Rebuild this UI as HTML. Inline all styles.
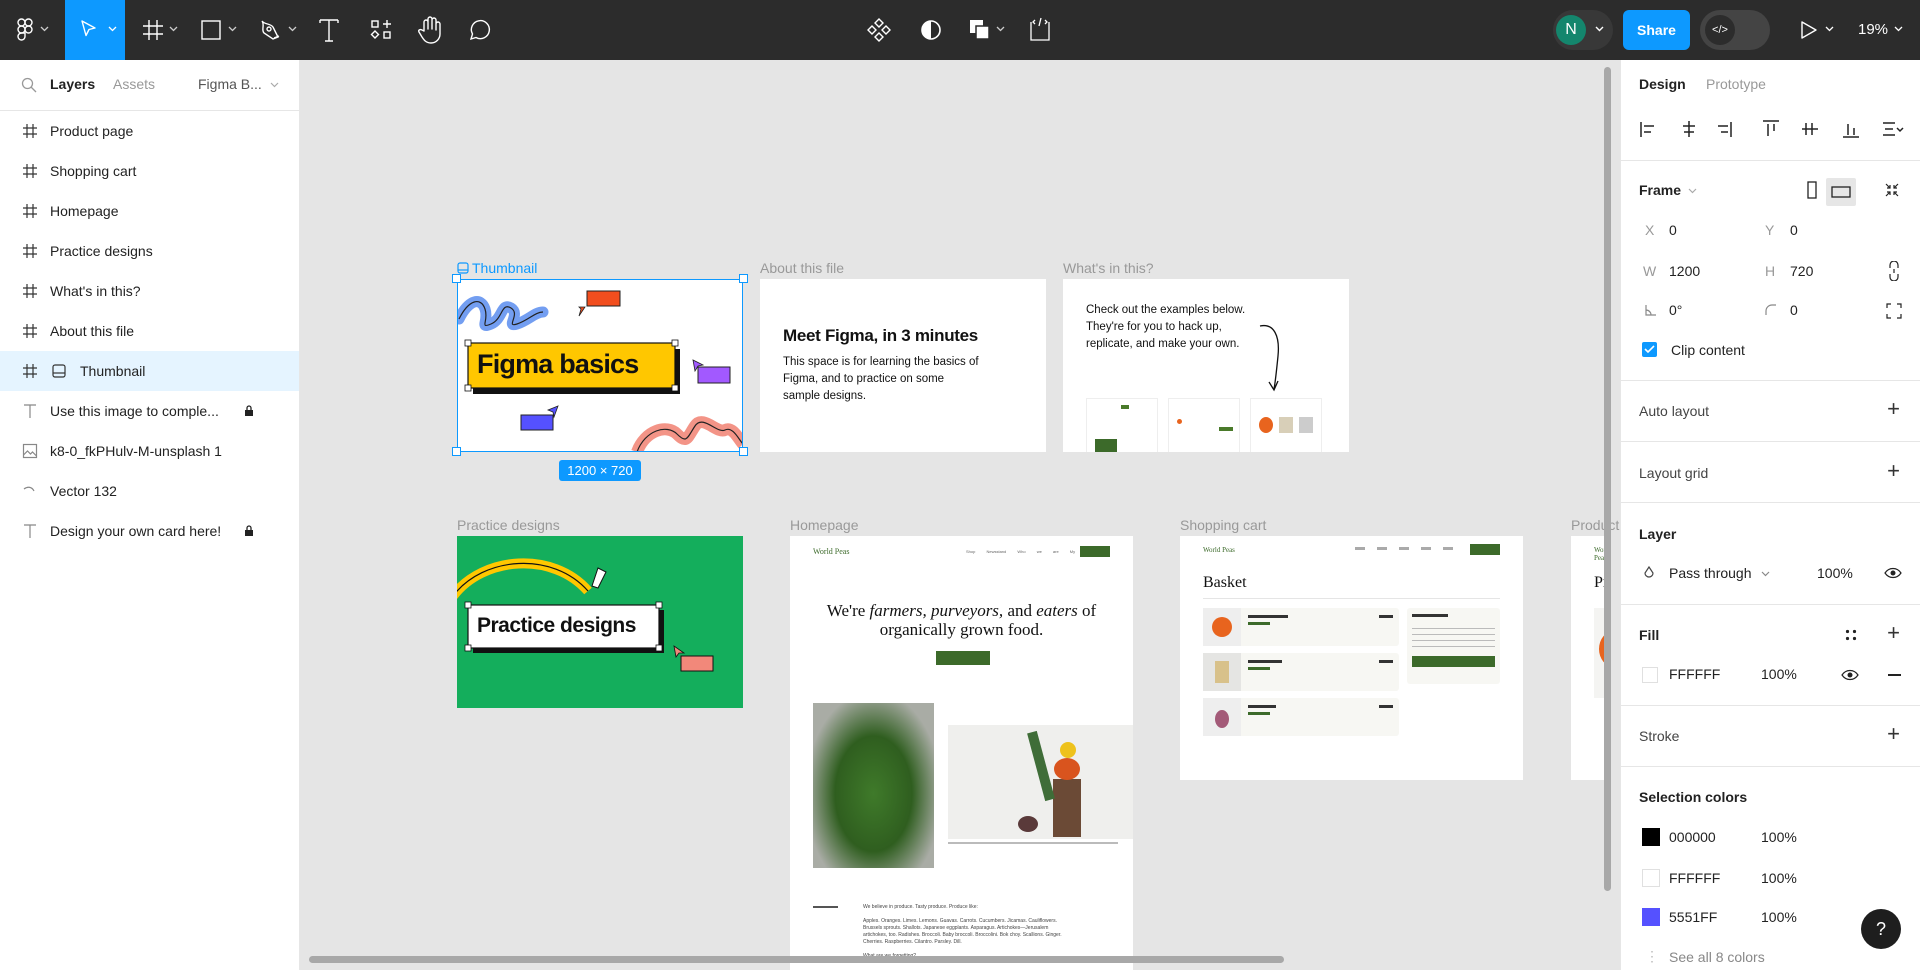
<!DOCTYPE html>
<html><head><meta charset="utf-8">
<style>
*{box-sizing:border-box;margin:0;padding:0}
body{width:1920px;height:970px;overflow:hidden;font-family:"Liberation Sans",sans-serif;background:#e5e5e5;position:relative;color:#222}
.a{position:absolute}
#top{left:0;top:0;width:1920px;height:60px;background:#2c2c2c}
#left{left:0;top:60px;width:300px;height:910px;background:#fff;border-right:1px solid #e6e6e6}
#right{left:1620px;top:60px;width:300px;height:910px;background:#fff;border-left:1px solid #e6e6e6}
.row{position:absolute;left:0;width:299px;height:40px;font-size:14px;display:flex;align-items:center}
.row .ic{position:absolute;left:22px;top:12px}
.row span{position:absolute;left:50px}
.lbl{position:absolute;font-size:14px;color:#999}
.fr{position:absolute;background:#fff;overflow:hidden}
.sec{position:absolute;left:18px;font-size:14px;color:#222}
.div{position:absolute;left:0;width:300px;height:1px;background:#e6e6e6}
.gray{color:#999}
.plus{position:absolute;right:20px;font-size:22px;font-weight:300;color:#333}
svg{display:block}
</style></head><body>

<div id="top" class="a">
  <svg class="a" style="left:16px;top:18px" width="18" height="24" viewBox="0 0 18 24" fill="none" stroke="#fff" stroke-width="1.4"><rect x="2" y="1" width="7" height="7" rx="3.5"/><rect x="9" y="1" width="7" height="7" rx="3.5"/><rect x="2" y="8" width="7" height="7" rx="3.5"/><circle cx="12.5" cy="11.5" r="3.5"/><path d="M2 18.5a3.5 3.5 0 0 0 7 0v-3.5H5.5A3.5 3.5 0 0 0 2 18.5z"/></svg>
  <svg class="a" style="left:40px;top:26px" width="9" height="6"><path d="M1 1l3.5 3.5L8 1" stroke="#ccc" fill="none" stroke-width="1.3"/></svg>
  <div class="a" style="left:65px;top:0;width:60px;height:60px;background:#0d99ff"></div>
  <svg class="a" style="left:80px;top:19px" width="18" height="22"><path d="M2 2l13 7-6 1.5-3 6z" stroke="#fff" fill="none" stroke-width="1.4" stroke-linejoin="round"/></svg>
  <svg class="a" style="left:108px;top:26px" width="9" height="6"><path d="M1 1l3.5 3.5L8 1" stroke="#fff" fill="none" stroke-width="1.3"/></svg>
  <svg class="a" style="left:142px;top:19px" width="22" height="22" stroke="#fff" stroke-width="1.4"><path d="M7 1v20M15 1v20M1 7h20M1 15h20"/></svg>
  <svg class="a" style="left:169px;top:26px" width="9" height="6"><path d="M1 1l3.5 3.5L8 1" stroke="#ccc" fill="none" stroke-width="1.3"/></svg>
  <svg class="a" style="left:200px;top:19px" width="22" height="22"><rect x="2" y="2" width="18" height="18" stroke="#fff" fill="none" stroke-width="1.4"/></svg>
  <svg class="a" style="left:228px;top:26px" width="9" height="6"><path d="M1 1l3.5 3.5L8 1" stroke="#ccc" fill="none" stroke-width="1.3"/></svg>
  <svg class="a" style="left:259px;top:18px" width="24" height="24" stroke="#fff" fill="none" stroke-width="1.4"><path d="M3 3c3 4 8 2 11 6l5 10-5 2-9-6C2 12 6 7 3 3z"/><circle cx="10" cy="11" r="2"/><path d="M15 20l5-2"/></svg>
  <svg class="a" style="left:288px;top:26px" width="9" height="6"><path d="M1 1l3.5 3.5L8 1" stroke="#ccc" fill="none" stroke-width="1.3"/></svg>
  <svg class="a" style="left:319px;top:18px" width="20" height="24" stroke="#fff" fill="none" stroke-width="1.4"><path d="M1 2h18M10 2v21M6 23h8M1 2v3M19 2v3"/></svg>
  <svg class="a" style="left:370px;top:19px" width="22" height="22" stroke="#fff" fill="none" stroke-width="1.4"><rect x="2" y="2" width="6" height="6"/><path d="M17 1v8M13 5h8"/><path d="M5 12l3.5 3.5L5 19l-3.5-3.5z"/><rect x="14" y="13" width="6" height="6"/></svg>
  <svg class="a" style="left:418px;top:15px" width="24" height="30" stroke="#fff" fill="none" stroke-width="1.4" stroke-linejoin="round"><path d="M6 16V7a2 2 0 0 1 4 0v7V4a2 2 0 0 1 4 0v10V5a2 2 0 0 1 4 0v10V9a2 2 0 0 1 4 0v10c0 5-4 9-9 9s-7-3-9-6l-3-5c-1-2 1-3 3-2z"/></svg>
  <svg class="a" style="left:467px;top:17px" width="26" height="26" stroke="#fff" fill="none" stroke-width="1.4"><path d="M4 22l1.5-5A9 9 0 1 1 9 20.5z"/></svg>
  <svg class="a" style="left:867px;top:18px" width="24" height="24" stroke="#fff" fill="none" stroke-width="1.4"><path d="M12 1l4 4-4 4-4-4zM12 15l4 4-4 4-4-4zM5 8l4 4-4 4-4-4zM19 8l4 4-4 4-4-4z"/></svg>
  <svg class="a" style="left:920px;top:19px" width="22" height="22"><circle cx="11" cy="11" r="9" stroke="#fff" fill="none" stroke-width="1.6"/><path d="M11 2a9 9 0 0 0 0 18z" fill="#fff"/></svg>
  <svg class="a" style="left:968px;top:18px" width="24" height="24"><rect x="2" y="2" width="13" height="13" fill="#fff"/><rect x="8" y="8" width="13" height="13" fill="#fff" stroke="#2c2c2c" stroke-width="1.5"/></svg>
  <svg class="a" style="left:996px;top:26px" width="9" height="6"><path d="M1 1l3.5 3.5L8 1" stroke="#ccc" fill="none" stroke-width="1.3"/></svg>
  <svg class="a" style="left:1028px;top:16px" width="24" height="26" stroke="#fff" fill="none" stroke-width="1.3"><path d="M3 6v18h18V6M7 4L5 6l2 2M17 4l2 2-2 2M13 2l-2 8"/></svg>
  <div class="a" style="left:1553px;top:10px;width:60px;height:40px;border-radius:20px;background:#383838"></div>
  <div class="a" style="left:1556px;top:15px;width:30px;height:30px;border-radius:50%;background:#14866d;color:#fff;font-size:16px;text-align:center;line-height:30px">N</div>
  <svg class="a" style="left:1595px;top:26px" width="9" height="6"><path d="M1 1l3.5 3.5L8 1" stroke="#fff" fill="none" stroke-width="1.4"/></svg>
  <div class="a" style="left:1623px;top:10px;width:67px;height:40px;border-radius:6px;background:#0d99ff;color:#fff;font-size:14px;font-weight:bold;text-align:center;line-height:40px">Share</div>
  <div class="a" style="left:1700px;top:10px;width:70px;height:40px;border-radius:20px;background:#444"></div>
  <div class="a" style="left:1705px;top:15px;width:30px;height:30px;border-radius:50%;background:#2c2c2c;color:#fff;font-size:11px;text-align:center;line-height:30px">&lt;/&gt;</div>
  <svg class="a" style="left:1800px;top:20px" width="18" height="20"><path d="M2 2l14 8-14 8z" stroke="#fff" fill="none" stroke-width="1.4" stroke-linejoin="round"/></svg>
  <svg class="a" style="left:1825px;top:26px" width="9" height="6"><path d="M1 1l3.5 3.5L8 1" stroke="#fff" fill="none" stroke-width="1.3"/></svg>
  <div class="a" style="left:1858px;top:21px;color:#fff;font-size:15px">19%</div>
  <svg class="a" style="left:1894px;top:26px" width="9" height="6"><path d="M1 1l3.5 3.5L8 1" stroke="#fff" fill="none" stroke-width="1.3"/></svg>
</div>

<div id="left" class="a">
  <svg class="a" style="left:21px;top:17px" width="16" height="16" stroke="#999" fill="none" stroke-width="1.3"><circle cx="6.5" cy="6.5" r="5"/><path d="M10 10l5 5"/></svg>
  <div class="a" style="left:50px;top:16px;font-size:14px;font-weight:bold">Layers</div>
  <div class="a" style="left:113px;top:16px;font-size:14px;color:#999">Assets</div>
  <div class="a" style="left:198px;top:16px;font-size:14px;color:#555">Figma B...</div>
  <svg class="a" style="left:270px;top:22px" width="9" height="6"><path d="M1 1l3.5 3.5L8 1" stroke="#aaa" fill="none" stroke-width="1.2"/></svg>
  <div class="a" style="left:0;top:50px;width:299px;height:1px;background:#e6e6e6"></div>

  <div class="row" style="top:51px"><svg class="ic" width="16" height="16" stroke="#333" stroke-width="1.2"><path d="M5 1v14M11 1v14M1 5h14M1 11h14"/></svg><span>Product page</span></div>
  <div class="row" style="top:91px"><svg class="ic" width="16" height="16" stroke="#333" stroke-width="1.2"><path d="M5 1v14M11 1v14M1 5h14M1 11h14"/></svg><span>Shopping cart</span></div>
  <div class="row" style="top:131px"><svg class="ic" width="16" height="16" stroke="#333" stroke-width="1.2"><path d="M5 1v14M11 1v14M1 5h14M1 11h14"/></svg><span>Homepage</span></div>
  <div class="row" style="top:171px"><svg class="ic" width="16" height="16" stroke="#333" stroke-width="1.2"><path d="M5 1v14M11 1v14M1 5h14M1 11h14"/></svg><span>Practice designs</span></div>
  <div class="row" style="top:211px"><svg class="ic" width="16" height="16" stroke="#333" stroke-width="1.2"><path d="M5 1v14M11 1v14M1 5h14M1 11h14"/></svg><span>What's in this?</span></div>
  <div class="row" style="top:251px"><svg class="ic" width="16" height="16" stroke="#333" stroke-width="1.2"><path d="M5 1v14M11 1v14M1 5h14M1 11h14"/></svg><span>About this file</span></div>
  <div class="row" style="top:291px;background:#e5f4ff"><svg class="ic" width="16" height="16" stroke="#333" stroke-width="1.2"><path d="M5 1v14M11 1v14M1 5h14M1 11h14"/></svg><svg class="a" style="left:51px;top:12px" width="16" height="16" stroke="#333" fill="none" stroke-width="1.2"><rect x="2" y="2" width="12" height="12" rx="2"/><path d="M2 10h12"/></svg><span style="left:80px">Thumbnail</span></div>
  <div class="row" style="top:331px"><svg class="ic" width="16" height="16" stroke="#888" stroke-width="1.2"><path d="M2 2h12M8 2v13"/></svg><span>Use this image to comple...</span><svg class="a" style="left:244px;top:14px" width="10" height="12"><rect x="1" y="5" width="8" height="6" fill="#222"/><path d="M3 5V3a2 2 0 0 1 4 0v2" stroke="#222" fill="none" stroke-width="1.3"/></svg></div>
  <div class="row" style="top:371px"><svg class="ic" width="16" height="16" stroke="#888" fill="none" stroke-width="1.2"><rect x="1.5" y="1.5" width="13" height="13"/><path d="M1.5 12l4-4 3 3 2-2 4 4"/></svg><span>k8-0_fkPHulv-M-unsplash 1</span></div>
  <div class="row" style="top:411px"><svg class="ic" width="16" height="16" stroke="#888" fill="none" stroke-width="1.2"><path d="M2 6c4-3 8-2 10 2"/></svg><span>Vector 132</span></div>
  <div class="row" style="top:451px"><svg class="ic" width="16" height="16" stroke="#888" stroke-width="1.2"><path d="M2 2h12M8 2v13"/></svg><span>Design your own card here!</span><svg class="a" style="left:244px;top:14px" width="10" height="12"><rect x="1" y="5" width="8" height="6" fill="#222"/><path d="M3 5V3a2 2 0 0 1 4 0v2" stroke="#222" fill="none" stroke-width="1.3"/></svg></div>
</div>

<div class="lbl" style="left:472px;top:260px;color:#0d99ff">Thumbnail</div>
<svg class="a" style="left:457px;top:262px" width="12" height="12" stroke="#0d99ff" fill="none" stroke-width="1.2"><rect x="1" y="1" width="10" height="10" rx="2"/><path d="M1 8h10"/></svg>
<div class="lbl" style="left:760px;top:260px">About this file</div>
<div class="lbl" style="left:1063px;top:260px">What's in this?</div>

<div class="fr" style="left:457px;top:279px;width:286px;height:173px">
  <svg class="a" style="left:0;top:0" width="286" height="173">
    <path d="M2 40c10-20 22-22 26-10s-6 20 6 15 10-22 20-16-6 20 6 16 18-12 26-12" stroke="#5b8def" stroke-width="11" fill="none" stroke-linecap="round" opacity=".85"/>
    <path d="M2 40c10-20 22-22 26-10s-6 20 6 15 10-22 20-16-6 20 6 16 18-12 26-12" stroke="#222" stroke-width="1.2" fill="none"/>
    <path d="M180 173c8-22 30-28 40-18s10 4 18-8 22 8 30 4 14 10 18 14" stroke="#f2887a" stroke-width="12" fill="none" opacity=".9"/>
    <path d="M180 173c8-22 30-28 40-18s10 4 18-8 22 8 30 4 14 10 18 14" stroke="#222" stroke-width="1.2" fill="none"/>
    <rect x="130" y="12" width="33" height="15" fill="#f24e1e" stroke="#222"/>
    <path d="M128 28l-6 9 2-7-2-2z" fill="#f24e1e" stroke="#222" stroke-width=".8"/>
    <rect x="241" y="88" width="32" height="16" fill="#a259ff" stroke="#222"/>
    <path d="M236 81l2 11 3-5 5-1z" fill="#a259ff" stroke="#222" stroke-width=".8"/>
    <rect x="64" y="136" width="32" height="15" fill="#5551ff" stroke="#222"/>
    <path d="M101 127l-10 4 5 2 1 5z" fill="#5551ff" stroke="#222" stroke-width=".8"/>
    <rect x="16" y="70" width="207" height="45" fill="#111"/>
    <rect x="11" y="64" width="207" height="45" fill="#ffc700" stroke="#111" stroke-width="1.2"/>
    <rect x="8" y="61" width="6" height="6" fill="#fff" stroke="#111" stroke-width=".8"/><rect x="215" y="61" width="6" height="6" fill="#fff" stroke="#111" stroke-width=".8"/><rect x="8" y="106" width="6" height="6" fill="#fff" stroke="#111" stroke-width=".8"/><rect x="215" y="106" width="6" height="6" fill="#fff" stroke="#111" stroke-width=".8"/>
  </svg>
  <div class="a" style="left:20px;top:70px;font-size:27px;font-weight:bold;color:#111;letter-spacing:-0.8px">Figma basics</div>
</div>
<div class="a" style="left:457px;top:279px;width:286px;height:173px;border:1.5px solid #0d99ff"></div>
<div class="a" style="left:452px;top:274px;width:9px;height:9px;background:#fff;border:1.3px solid #0d99ff"></div>
<div class="a" style="left:739px;top:274px;width:9px;height:9px;background:#fff;border:1.3px solid #0d99ff"></div>
<div class="a" style="left:452px;top:447px;width:9px;height:9px;background:#fff;border:1.3px solid #0d99ff"></div>
<div class="a" style="left:739px;top:447px;width:9px;height:9px;background:#fff;border:1.3px solid #0d99ff"></div>
<div class="a" style="left:559px;top:460px;width:82px;height:21px;background:#0d99ff;border-radius:3px;color:#fff;font-size:13px;text-align:center;line-height:21px">1200 × 720</div>

<div class="fr" style="left:760px;top:279px;width:286px;height:173px">
  <div class="a" style="left:23px;top:47px;font-size:17px;font-weight:bold;color:#111;letter-spacing:-0.3px">Meet Figma, in 3 minutes</div>
  <div class="a" style="left:23px;top:75px;font-size:11.5px;line-height:17px;color:#111;width:200px">This space is for learning the basics of Figma, and to practice on some sample designs.</div>
</div>

<div class="fr" style="left:1063px;top:279px;width:286px;height:173px">
  <div class="a" style="left:23px;top:23px;font-size:11.5px;line-height:17px;color:#111;width:175px">Check out the examples below. They're for you to hack up, replicate, and make your own.</div>
  <svg class="a" style="left:195px;top:45px" width="40" height="70"><path d="M2 2c14-3 20 10 18 30s-3 28-4 33M11 58l5 8 4-9" stroke="#111" fill="none" stroke-width="1.3"/></svg>
  <div class="a" style="left:23px;top:119px;width:72px;height:60px;border:1px solid #eee;background:#fff"><div class="a" style="left:8px;top:40px;width:22px;height:20px;background:#3c6a2a"></div><div class="a" style="left:34px;top:6px;width:8px;height:4px;background:#4a7a2a"></div></div>
  <div class="a" style="left:105px;top:119px;width:72px;height:60px;border:1px solid #eee;background:#fff"><div class="a" style="left:8px;top:20px;width:5px;height:5px;border-radius:50%;background:#e8641e"></div><div class="a" style="left:50px;top:28px;width:14px;height:4px;background:#4a7a2a"></div></div>
  <div class="a" style="left:187px;top:119px;width:72px;height:60px;border:1px solid #eee;background:#fff"><div class="a" style="left:8px;top:18px;width:14px;height:16px;border-radius:50%;background:#e8641e"></div><div class="a" style="left:28px;top:18px;width:14px;height:16px;background:#d8cfb8"></div><div class="a" style="left:48px;top:18px;width:14px;height:16px;background:#ccc"></div></div>
</div>

<div class="lbl" style="left:457px;top:517px">Practice designs</div>
<div class="lbl" style="left:790px;top:517px">Homepage</div>
<div class="lbl" style="left:1180px;top:517px">Shopping cart</div>
<div class="lbl" style="left:1571px;top:517px">Product page</div>

<div class="fr" style="left:457px;top:536px;width:286px;height:172px;background:#14ae5c">
  <svg class="a" style="left:0;top:0" width="286" height="172">
    <path d="M-4 60c30-40 100-45 135-5" stroke="#ffc700" stroke-width="10" fill="none"/>
    <path d="M-4 60c30-40 100-45 135-5" stroke="#111" stroke-width="1.2" fill="none"/>
    <path d="M135 50l6-18 8 4-8 16z" fill="#fff" stroke="#111"/>
    <rect x="224" y="120" width="32" height="15" fill="#f2887a" stroke="#111"/>
    <path d="M217 110l2 11 3-4 5 0z" fill="#f2887a" stroke="#111" stroke-width=".8"/>
    <rect x="16" y="74" width="191" height="43" fill="#111"/>
    <rect x="11" y="69" width="191" height="43" fill="#fff" stroke="#111" stroke-width="1.2"/>
    <rect x="8" y="66" width="6" height="6" fill="#fff" stroke="#111" stroke-width=".8"/><rect x="199" y="66" width="6" height="6" fill="#fff" stroke="#111" stroke-width=".8"/><rect x="8" y="109" width="6" height="6" fill="#fff" stroke="#111" stroke-width=".8"/><rect x="199" y="109" width="6" height="6" fill="#fff" stroke="#111" stroke-width=".8"/>
  </svg>
  <div class="a" style="left:20px;top:78px;font-size:21px;font-weight:bold;color:#111;letter-spacing:-0.5px">Practice designs</div>
</div>

<div class="fr" style="left:790px;top:536px;width:343px;height:434px">
  <div class="a" style="left:23px;top:11px;font-family:'Liberation Serif',serif;font-size:8px;color:#3c6a2a">World Peas</div>
  <div class="a" style="left:176px;top:13px;font-size:4px;color:#666;word-spacing:10px">Shop Newsstand Who&nbsp;we&nbsp;are My&nbsp;profile</div>
  <div class="a" style="left:290px;top:10px;width:30px;height:11px;background:#3c6a2a"></div>
  <div class="a" style="left:0;top:65px;width:343px;text-align:center;font-family:'Liberation Serif',serif;font-size:17px;line-height:19px;color:#111">We're <i>farmers, purveyors,</i> and <i>eaters</i> of<br>organically grown food.</div>
  <div class="a" style="left:146px;top:115px;width:54px;height:14px;background:#3c6a2a"></div>
  <div class="a" style="left:23px;top:167px;width:121px;height:165px;background:radial-gradient(ellipse at 50% 55%,#3f7a2a 0%,#2f5e1f 45%,#a9aca5 80%)"></div>
  <div class="a" style="left:158px;top:189px;width:185px;height:114px;background:#efefed"></div>
  <div class="a" style="left:263px;top:243px;width:28px;height:58px;background:#6b4a36"></div>
  <div class="a" style="left:264px;top:222px;width:26px;height:22px;border-radius:50%;background:#d9541e"></div>
  <div class="a" style="left:270px;top:206px;width:16px;height:16px;border-radius:50%;background:#eec21c"></div>
  <div class="a" style="left:246px;top:195px;width:10px;height:70px;background:#3f6d38;transform:rotate(-15deg)"></div>
  <div class="a" style="left:228px;top:280px;width:20px;height:16px;border-radius:50%;background:#5a3a3a"></div>
  <div class="a" style="left:158px;top:306px;width:170px;height:2px;background:#bbb"></div>
  <div class="a" style="left:23px;top:370px;width:25px;height:2px;background:#555"></div>
  <div class="a" style="left:73px;top:368px;font-size:5px;line-height:7px;color:#444;width:200px">We believe in produce. Tasty produce. Produce like:<br><br>Apples. Oranges. Limes. Lemons. Guavas. Carrots. Cucumbers. Jicamas. Cauliflowers. Brussels sprouts. Shallots. Japanese eggplants. Asparagus. Artichokes—Jerusalem artichokes, too. Radishes. Broccoli. Baby broccoli. Broccolini. Bok choy. Scallions. Ginger. Cherries. Raspberries. Cilantro. Parsley. Dill.<br><br>What are we forgetting?</div>
</div>

<div class="fr" style="left:1180px;top:536px;width:343px;height:244px">
  <div class="a" style="left:23px;top:10px;font-family:'Liberation Serif',serif;font-size:7px;color:#3c6a2a">World Peas</div>
  <div class="a" style="left:290px;top:8px;width:30px;height:11px;background:#3c6a2a"></div>
  <div class="a" style="left:175px;top:11px;width:100px;height:3px;background:repeating-linear-gradient(90deg,#aaa 0 10px,transparent 10px 22px)"></div>
  <div class="a" style="left:23px;top:38px;font-family:'Liberation Serif',serif;font-size:16px;color:#111">Basket</div>
  <div class="a" style="left:23px;top:62px;width:297px;height:1px;background:#e5e5e5"></div>
  <div class="a" style="left:23px;top:72px;width:196px;height:38px;background:#f7f7f3;border-radius:3px"><div class="a" style="left:0;top:0;width:38px;height:38px;background:#eee"></div><div class="a" style="left:9px;top:9px;width:20px;height:20px;border-radius:50%;background:#e8641e"></div><div class="a" style="left:45px;top:7px;width:40px;height:3px;background:#333"></div><div class="a" style="left:45px;top:14px;width:22px;height:3px;background:#3c6a2a"></div><div class="a" style="left:176px;top:7px;width:14px;height:3px;background:#333"></div></div>
  <div class="a" style="left:23px;top:117px;width:196px;height:38px;background:#f7f7f3;border-radius:3px"><div class="a" style="left:0;top:0;width:38px;height:38px;background:#e5e5e3"></div><div class="a" style="left:12px;top:8px;width:14px;height:22px;background:#d8c18a"></div><div class="a" style="left:45px;top:7px;width:34px;height:3px;background:#333"></div><div class="a" style="left:45px;top:14px;width:22px;height:3px;background:#3c6a2a"></div><div class="a" style="left:176px;top:7px;width:14px;height:3px;background:#333"></div></div>
  <div class="a" style="left:23px;top:162px;width:196px;height:38px;background:#f7f7f3;border-radius:3px"><div class="a" style="left:0;top:0;width:38px;height:38px;background:#eee"></div><div class="a" style="left:12px;top:12px;width:14px;height:18px;border-radius:50%;background:#a35a78"></div><div class="a" style="left:45px;top:7px;width:28px;height:3px;background:#333"></div><div class="a" style="left:45px;top:14px;width:22px;height:3px;background:#3c6a2a"></div><div class="a" style="left:176px;top:7px;width:14px;height:3px;background:#333"></div></div>
  <div class="a" style="left:227px;top:72px;width:93px;height:76px;background:#f7f7f3;border-radius:3px"><div class="a" style="left:5px;top:6px;width:36px;height:3px;background:#333"></div><div class="a" style="left:5px;top:20px;width:83px;height:20px;background:repeating-linear-gradient(#bbb 0 1px,transparent 1px 6px)"></div><div class="a" style="left:5px;top:48px;width:83px;height:11px;background:#3c6a2a"></div></div>
</div>

<div class="fr" style="left:1571px;top:536px;width:40px;height:244px">
  <div class="a" style="left:23px;top:10px;font-family:'Liberation Serif',serif;font-size:7px;color:#3c6a2a">World Peas</div>
  <div class="a" style="left:23px;top:38px;font-family:'Liberation Serif',serif;font-size:16px;color:#111">Product</div>
  <div class="a" style="left:23px;top:72px;width:40px;height:90px;background:#f4f4f2"></div>
  <div class="a" style="left:28px;top:95px;width:30px;height:36px;border-radius:50%;background:#e8641e"></div>
</div>

<div class="a" style="left:1604px;top:67px;width:7px;height:824px;border-radius:4px;background:#a8a8a8"></div>
<div class="a" style="left:309px;top:956px;width:975px;height:7px;border-radius:4px;background:#a8a8a8"></div>

<div id="right" class="a">
  <div class="a" style="left:18px;top:16px;font-size:14px;font-weight:bold">Design</div>
  <div class="a" style="left:85px;top:16px;font-size:14px;color:#999">Prototype</div>
  <svg class="a" style="left:18px;top:58px" width="270" height="22" stroke="#222" stroke-width="1.5" fill="none">
    <path d="M2 4v15M5 8h10M5 14h7"/>
    <path d="M50 3v16M44 8h12M45 14h10"/>
    <path d="M92 4v15M79 8h10M82 14h7"/>
    <path d="M124 3h16M129 6v12M135 6v7"/>
    <path d="M167 5v12M173 5v12M163 11h16"/>
    <path d="M204 19h16M209 6v11M215 10v7"/>
    <path d="M244 5h12M246 11h8M244 17h12M258 10l3 3 3-3"/>
  </svg>
  <div class="div" style="top:100px"></div>
  <div class="sec" style="top:122px;font-weight:bold">Frame</div>
  <svg class="a" style="left:67px;top:128px" width="9" height="6"><path d="M1 1l3.5 3.5L8 1" stroke="#aaa" fill="none" stroke-width="1.2"/></svg>
  <svg class="a" style="left:186px;top:121px" width="10" height="18"><rect x="1" y="1" width="8" height="16" stroke="#222" fill="none" stroke-width="1.3"/></svg>
  <div class="a" style="left:205px;top:118px;width:30px;height:28px;background:#e6e6e6;border-radius:2px"></div>
  <svg class="a" style="left:210px;top:126px" width="20" height="12"><rect x="1" y="1" width="18" height="10" stroke="#222" fill="none" stroke-width="1.3"/></svg>
  <svg class="a" style="left:263px;top:122px" width="16" height="16" stroke="#222" stroke-width="1.2" fill="none"><path d="M2 2l4 4M6 3v3H3M14 2l-4 4M10 3v3h3M2 14l4-4M3 10h3v3M14 14l-4-4M13 10h-3v3"/></svg>
  <div class="a gray" style="left:24px;top:162px;font-size:14px">X</div><div class="a" style="left:48px;top:162px;font-size:14px">0</div>
  <div class="a gray" style="left:144px;top:162px;font-size:14px">Y</div><div class="a" style="left:169px;top:162px;font-size:14px">0</div>
  <div class="a gray" style="left:22px;top:203px;font-size:14px">W</div><div class="a" style="left:48px;top:203px;font-size:14px">1200</div>
  <div class="a gray" style="left:144px;top:203px;font-size:14px">H</div><div class="a" style="left:169px;top:203px;font-size:14px">720</div>
  <svg class="a" style="left:267px;top:201px" width="12" height="20" stroke="#222" stroke-width="1.2" fill="none"><path d="M2 7V4a4 4 0 0 1 8 0v3M2 13v3a4 4 0 0 0 8 0v-3M6 8v4"/></svg>
  <svg class="a" style="left:24px;top:244px" width="12" height="12" stroke="#888" stroke-width="1.2" fill="none"><path d="M1 1v10h10M1 6a5 5 0 0 1 5 5"/></svg>
  <div class="a" style="left:48px;top:242px;font-size:14px">0°</div>
  <svg class="a" style="left:144px;top:244px" width="12" height="12" stroke="#888" stroke-width="1.2" fill="none"><path d="M1 11V7a6 6 0 0 1 6-6h4"/></svg>
  <div class="a" style="left:169px;top:242px;font-size:14px">0</div>
  <svg class="a" style="left:265px;top:243px" width="16" height="16" stroke="#222" stroke-width="1.2" fill="none"><path d="M1 5V1h4M11 1h4v4M15 11v4h-4M5 15H1v-4"/></svg>
  <div class="a" style="left:21px;top:282px;width:15px;height:15px;background:#0d99ff;border-radius:2px"></div>
  <svg class="a" style="left:23px;top:285px" width="11" height="9"><path d="M1 4l3 3 6-6" stroke="#fff" fill="none" stroke-width="1.6"/></svg>
  <div class="a" style="left:50px;top:282px;font-size:14px">Clip content</div>
  <div class="div" style="top:320px"></div>
  <div class="sec" style="top:343px;color:#444">Auto layout</div><div class="plus" style="top:336px">+</div>
  <div class="div" style="top:381px"></div>
  <div class="sec" style="top:405px;color:#444">Layout grid</div><div class="plus" style="top:398px">+</div>
  <div class="div" style="top:442px"></div>
  <div class="sec" style="top:466px;font-weight:bold">Layer</div>
  <svg class="a" style="left:22px;top:506px" width="12" height="14" stroke="#444" stroke-width="1.2" fill="none"><path d="M6 1L2 7a4 4 0 1 0 8 0z"/></svg>
  <div class="a" style="left:48px;top:505px;font-size:14px">Pass through</div>
  <svg class="a" style="left:140px;top:511px" width="9" height="6"><path d="M1 1l3.5 3.5L8 1" stroke="#888" fill="none" stroke-width="1.2"/></svg>
  <div class="a" style="left:196px;top:505px;font-size:14px">100%</div>
  <svg class="a" style="left:263px;top:507px" width="18" height="12"><path d="M1 6c4-6 12-6 16 0-4 6-12 6-16 0z" stroke="#222" fill="none" stroke-width="1.2"/><circle cx="9" cy="6" r="2.5" fill="#222"/></svg>
  <div class="div" style="top:544px"></div>
  <div class="sec" style="top:567px;font-weight:bold">Fill</div>
  <svg class="a" style="left:224px;top:569px" width="12" height="12" fill="#222"><circle cx="2.5" cy="2.5" r="1.6"/><circle cx="9.5" cy="2.5" r="1.6"/><circle cx="2.5" cy="9.5" r="1.6"/><circle cx="9.5" cy="9.5" r="1.6"/></svg>
  <div class="plus" style="top:560px">+</div>
  <div class="a" style="left:21px;top:607px;width:16px;height:16px;background:#fff;border:1px solid #e0e0e0"></div>
  <div class="a" style="left:48px;top:606px;font-size:14px">FFFFFF</div>
  <div class="a" style="left:140px;top:606px;font-size:14px">100%</div>
  <svg class="a" style="left:220px;top:609px" width="18" height="12"><path d="M1 6c4-6 12-6 16 0-4 6-12 6-16 0z" stroke="#222" fill="none" stroke-width="1.2"/><circle cx="9" cy="6" r="2.5" fill="#222"/></svg>
  <div class="a" style="left:267px;top:614px;width:13px;height:1.5px;background:#222"></div>
  <div class="div" style="top:645px"></div>
  <div class="sec" style="top:668px;color:#444">Stroke</div><div class="plus" style="top:661px">+</div>
  <div class="div" style="top:706px"></div>
  <div class="sec" style="top:729px;font-weight:bold">Selection colors</div>
  <div class="a" style="left:21px;top:768px;width:18px;height:18px;background:#000"></div>
  <div class="a" style="left:48px;top:769px;font-size:14px">000000</div><div class="a" style="left:140px;top:769px;font-size:14px">100%</div>
  <div class="a" style="left:21px;top:809px;width:18px;height:18px;background:#fff;border:1px solid #e0e0e0"></div>
  <div class="a" style="left:48px;top:810px;font-size:14px">FFFFFF</div><div class="a" style="left:140px;top:810px;font-size:14px">100%</div>
  <div class="a" style="left:21px;top:848px;width:18px;height:18px;background:#5551ff"></div>
  <div class="a" style="left:48px;top:849px;font-size:14px">5551FF</div><div class="a" style="left:140px;top:849px;font-size:14px">100%</div>
  <div class="a" style="left:24px;top:888px;font-size:14px;color:#bbb">⋮</div>
  <div class="a" style="left:48px;top:889px;font-size:14px;color:#888">See all 8 colors</div>
  <div class="a" style="left:240px;top:849px;width:40px;height:40px;border-radius:50%;background:#1e1e1e;color:#fff;font-size:18px;text-align:center;line-height:40px">?</div>
</div>
</body></html>
